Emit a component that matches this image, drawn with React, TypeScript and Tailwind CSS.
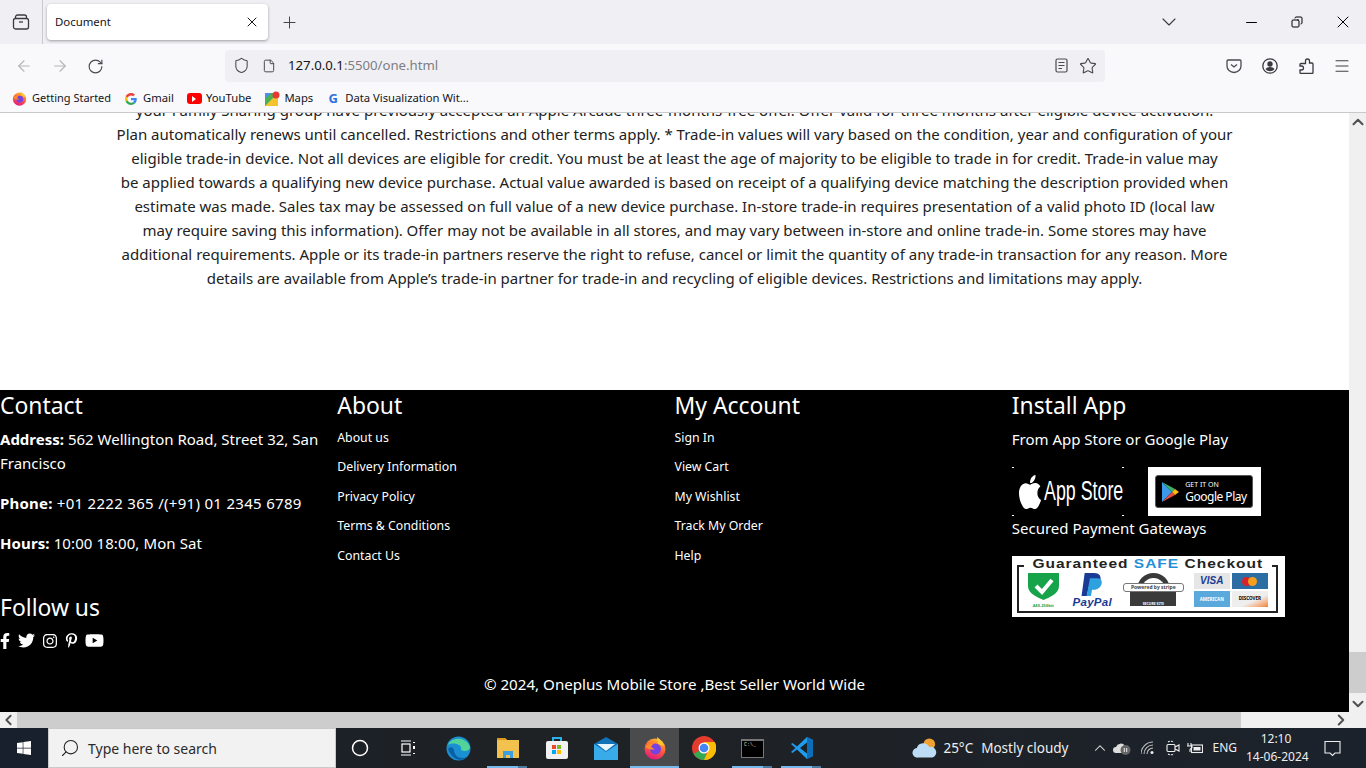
import React from "react";
import { FaFacebookF, FaTwitter, FaInstagram, FaPinterestP, FaYoutube, FaApple, FaWindows } from "react-icons/fa";
import { X, Plus, ChevronDown, Minus, Copy, ArrowLeft, ArrowRight, RotateCw, Shield, File, Star, Menu, Search, ChevronUp, ChevronLeft, ChevronRight, Circle } from "lucide-react";

const lines = [
  "your Family Sharing group have previously accepted an Apple Arcade three-months-free offer. Offer valid for three months after eligible device activation.",
  "Plan automatically renews until cancelled. Restrictions and other terms apply. * Trade-in values will vary based on the condition, year and configuration of your",
  "eligible trade-in device. Not all devices are eligible for credit. You must be at least the age of majority to be eligible to trade in for credit. Trade-in value may",
  "be applied towards a qualifying new device purchase. Actual value awarded is based on receipt of a qualifying device matching the description provided when",
  "estimate was made. Sales tax may be assessed on full value of a new device purchase. In-store trade-in requires presentation of a valid photo ID (local law",
  "may require saving this information). Offer may not be available in all stores, and may vary between in-store and online trade-in. Some stores may have",
  "additional requirements. Apple or its trade-in partners reserve the right to refuse, cancel or limit the quantity of any trade-in transaction for any reason. More",
  "details are available from Apple’s trade-in partner for trade-in and recycling of eligible devices. Restrictions and limitations may apply.",
];

function Firefox({ size = 16, id }: { size?: number; id: string }) {
  return (
    <svg width={size} height={size} viewBox="0 0 24 24">
      <defs>
        <linearGradient id={id} x1="0.7" y1="0" x2="0.3" y2="1">
          <stop offset="0" stopColor="#ffbd2e" />
          <stop offset="0.5" stopColor="#ff5a36" />
          <stop offset="1" stopColor="#e31587" />
        </linearGradient>
      </defs>
      <circle cx="12" cy="13" r="10.5" fill={`url(#${id})`} />
      <path d="M14 1c3 2 6 5 7 9l-6-2c0-3-1-5-1-7z" fill="#ffc92e" />
      <circle cx="12.5" cy="13" r="5.5" fill="#7542e5" />
      <path d="M2 11c2-3 5-4 8-3l-2 3c2 1 3 2 4 2-2 1-6 1-10-2z" fill="#ff8a2a" />
    </svg>
  );
}

function GoogleG({ size = 14 }: { size?: number }) {
  return (
    <svg width={size} height={size} viewBox="0 0 48 48">
      <path fill="#EA4335" d="M24 9.5c3.5 0 6.6 1.2 9.1 3.6l6.8-6.8C35.8 2.4 30.3 0 24 0 14.6 0 6.5 5.4 2.6 13.2l7.9 6.2C12.4 13.6 17.7 9.5 24 9.5z" />
      <path fill="#4285F4" d="M47 24.5c0-1.6-.1-3.1-.4-4.5H24v9h13c-.6 3-2.2 5.5-4.8 7.2l7.5 5.8C44.1 37.9 47 31.8 47 24.5z" />
      <path fill="#FBBC05" d="M10.5 28.6c-.5-1.4-.8-3-.8-4.6s.3-3.2.8-4.6l-7.9-6.2C.9 16.5 0 20.1 0 24s.9 7.5 2.6 10.8l7.9-6.2z" />
      <path fill="#34A853" d="M24 48c6.5 0 11.900-2.100 15.900-5.800l-7.500-5.800c-2.100 1.400-4.800 2.300-8.300 2.300-6.300 0-11.600-4.200-13.500-9.900l-7.900 6.200C6.500 42.600 14.600 48 24 48z" />
    </svg>
  );
}

function Bookmark({ icon, label, gap, ml, size = "text-[11.25px]" }: { icon: React.ReactNode; label: string; gap: string; ml: string; size?: string }) {
  return (
    <div className={`flex items-center ${gap} ${ml} ${size} text-[#15141a] whitespace-nowrap`}>
      {icon}
      <span>{label}</span>
    </div>
  );
}

function AppStoreBadge() {
  return (
    <div className="w-[112px] h-[49px] bg-black flex items-center pl-[3px] relative">
      <span className="absolute left-0 top-0 w-[2px] h-px bg-white" />
      <span className="absolute right-0 top-0 w-[2px] h-px bg-white" />
      <span className="absolute left-0 bottom-0 w-[2px] h-px bg-white" />
      <span className="absolute right-0 bottom-0 w-[2px] h-px bg-white" />
      <FaApple className="text-white scale-y-[1.3]" size={30} />
      <span className="block ml-[-1px] w-[78px] text-white text-[27px] leading-none font-['Liberation_Sans',sans-serif] whitespace-nowrap origin-left scale-x-[0.66]">App Store</span>
    </div>
  );
}

function GooglePlayBadge() {
  return (
    <div className="w-[113px] h-[49px] bg-white flex items-center justify-center">
      <div className="w-[98px] h-[33px] bg-black border border-[#555] rounded-[3px] flex items-center gap-[6px] pl-[6px]">
        <svg width="17" height="20" viewBox="0 0 17 20">
          <path d="M0 0l10 10L0 20z" fill="#3b9ae8" />
          <path d="M0 0l13 7-3 3z" fill="#36b26c" />
          <path d="M0 20l13-7-3-3z" fill="#e94b3c" />
          <path d="M13 7l4 3-4 3-3-3z" fill="#f9bc15" />
        </svg>
        <div className="text-white leading-none whitespace-nowrap">
          <div className="text-[7px] leading-[8px] mb-[1px]">GET IT ON</div>
          <div className="text-[12px] leading-[13px] tracking-[-0.5px]">Google Play</div>
        </div>
      </div>
    </div>
  );
}

function PaymentBadge() {
  return (
    <div className="relative w-[273px] h-[61px] bg-white pl-[5px] pt-[9px] text-black">
      <div className="absolute left-[12px] top-[1px] w-[248px] bg-white text-[15.5px] leading-[14px] font-bold text-center text-[#222] font-['Liberation_Sans',sans-serif] tracking-[1px] whitespace-nowrap scale-y-[0.85]">
        Guaranteed <span className="text-[#1f8fd6]">SAFE</span> Checkout
      </div>
      <div className="w-[261px] h-[48px] border-2 border-[#222] pl-[9px] pt-[6px] flex items-start">
        <div className="w-[31px] flex flex-col items-center">
          <svg width="31" height="27" viewBox="0 0 31 27">
            <path d="M0 0h31v13c0 7-8 11-15.500 14C8 24 0 20 0 13z" fill="#16a34a" />
            <path d="M8 13l6 6L24 7" stroke="#fff" strokeWidth="4" fill="none" />
          </svg>
          <span className="mt-[3px] text-[4px] leading-[5px] text-[#16a34a] font-bold whitespace-nowrap">AES-256bit</span>
        </div>
        <div className="ml-[9px] w-[49px] flex flex-col items-center font-['Liberation_Sans',sans-serif]">
          <svg width="26" height="23" viewBox="0 0 22 22">
            <path d="M4 0h9c5 0 7 3 6 7s-4 6-8 6H8l-2 9H1z" fill="#1a3b94" />
            <path d="M9 5h7c4 0 5 3 4 6s-4 5-7 5h-2l-1 6H6z" fill="#2da0df" />
          </svg>
          <span className="mt-[2px] text-[11.5px] leading-[9px] font-bold italic text-[#1a3b94] tracking-[0.3px]">PayPal</span>
        </div>
        <div className="ml-[6px] relative w-[61px] h-[33px] flex flex-col items-center">
          <div className="w-[33px] h-[18px] border-[5px] border-b-0 border-[#3a3a3a] rounded-t-full" />
          <div className="w-[46px] h-[15px] bg-[#3a3a3a]" />
          <div className="absolute top-[10px] w-[61px] h-[9px] bg-white border border-[#777] rounded-[3px] text-[5px] leading-[7px] text-center font-bold text-[#444] whitespace-nowrap">Powered by stripe</div>
          <div className="absolute bottom-0 text-[3.5px] leading-[5px] text-white font-bold whitespace-nowrap">SECURE SITE</div>
        </div>
        <div className="ml-[10px] w-[74px] grid grid-cols-2 gap-[2px]">
          <div className="h-[16px] bg-[#e6e6e6] text-[10px] leading-[16px] text-center font-bold italic text-[#1a3b94] font-['Liberation_Sans',sans-serif]">VISA</div>
          <div className="h-[16px] bg-[#2c6ea3] flex items-center justify-center">
            <span className="w-[9px] h-[9px] rounded-full bg-[#d8232a]" />
            <span className="w-[9px] h-[9px] rounded-full bg-[#f79e1b] -ml-[3px]" />
          </div>
          <div className="h-[16px] bg-[#5aa9dd] text-[4.5px] leading-[16px] text-center text-white font-bold whitespace-nowrap overflow-hidden">AMERICAN</div>
          <div className="h-[16px] text-[4.5px] leading-[14px] text-center font-bold bg-gradient-to-br from-[#eeeeee] from-60% to-[#f08020]">DISCOVER</div>
        </div>
      </div>
    </div>
  );
}

function TaskIcon({ children, active, running, narrow }: { children: React.ReactNode; active?: boolean; running?: boolean; narrow?: boolean }) {
  return (
    <div className={`relative w-[49px] h-[40px] flex items-center justify-center ${active ? "bg-[#4a4b4d]" : ""}`}>
      {children}
      {running && !narrow && <span className="absolute bottom-0 left-0 h-[2px] w-full bg-[#76b9ed]" />}
      {running && narrow && (
        <span className="absolute bottom-0 left-[4px] w-[40px] h-[2px] flex">
          <span className="w-[31px] bg-[#76b9ed]" />
          <span className="w-[9px] bg-[#4d7a9f]" />
        </span>
      )}
    </div>
  );
}

function Links({ items }: { items: string[] }) {
  return (
    <div className="mt-[7.6px] flex flex-col gap-[10.5px] text-[12.3px] leading-[19px]">
      {items.map((t) => <div key={t}>{t}</div>)}
    </div>
  );
}

function Heading({ children, className = "" }: { children: React.ReactNode; className?: string }) {
  return <div className={`h-[30px] text-[22.9px] leading-[32px] ${className}`}>{children}</div>;
}

export default function App() {
  return (
    <div className="w-[1366px] h-[768px] overflow-hidden flex flex-col bg-white font-['Noto_Sans',sans-serif]">
      {/* tab strip */}
      <div className="h-[44px] bg-[#f0f0f4] flex items-center shrink-0">
        <div className="w-[42px] flex justify-center">
          <svg width="18" height="18" viewBox="0 0 18 18" fill="none" stroke="#3a3a3f" strokeWidth="1.3">
            <rect x="1.5" y="5.500" width="15" height="10.500" rx="2" />
            <path d="M3.500 5.500V4a2 2 0 0 1 2-2h7a2 2 0 0 1 2 2v1.500" />
            <path d="M7 9h4" />
          </svg>
        </div>
        <div className="w-px h-[44px] bg-[#c9c9ce]" />
        <div className="ml-[4px] w-[221px] h-[36px] rounded-[4px] bg-white shadow-[0_1px_3px_rgba(0,0,0,0.35)] flex items-center justify-between pl-[8px] pr-[8px]">
          <span className="text-[11.4px] text-[#15141a]">Document</span>
          <X size={16} strokeWidth={1.5} className="text-[#15141a]" />
        </div>
        <Plus size={19} strokeWidth={1.2} className="ml-[12px] text-[#3a3a3f]" />
        <div className="ml-auto flex items-center">
          <ChevronDown size={24} strokeWidth={1.1} className="text-[#3a3a3f] mr-[62px]" />
          <Minus size={17} strokeWidth={1.4} className="text-black mr-[31px]" />
          <Copy size={12} strokeWidth={2} className="text-black mr-[30px] -scale-x-100" />
          <X size={20} strokeWidth={1.2} className="text-black mr-[13px]" />
        </div>
      </div>
      {/* nav */}
      <div className="h-[44px] bg-[#f9f9fb] flex items-center shrink-0">
        <ArrowLeft size={18} strokeWidth={1.5} className="ml-[15px] text-[#b5b5b8]" />
        <ArrowRight size={18} strokeWidth={1.5} className="ml-[18px] text-[#b5b5b8]" />
        <RotateCw size={17} strokeWidth={1.6} className="ml-[18px] text-[#4a4a4f]" />
        <div className="ml-[121px] w-[880px] h-[32px] mt-[-1px] bg-[#f0f0f4] rounded-[4px] flex items-center pl-[8px] pr-[8px]">
          <Shield size={17} strokeWidth={1.5} className="text-[#4a4a4f]" />
          <File size={14} strokeWidth={1.7} className="ml-[12px] text-[#4a4a4f]" />
          <span className="ml-[12px] text-[13.2px] text-[#15141a]">127.0.0.1<span className="text-[#7d7d84]">:5500/one.html</span></span>
          <svg width="13" height="15" viewBox="0 0 13 15" fill="none" stroke="#4a4a4f" strokeWidth="1.200" className="ml-auto">
            <rect x="1" y="1" width="11" height="13" rx="1.500" />
            <path d="M3.500 4.500h6M3.500 7.500h6M3.500 10.500h3.500" />
          </svg>
          <Star size={18} strokeWidth={1.5} className="ml-[11px] text-[#4a4a4f]" />
        </div>
        <svg width="16" height="16" viewBox="0 0 16 16" className="ml-[121px]">
          <path d="M2 2h12a1 1 0 0 1 1 1v5a7 6.500 0 0 1-14 0V3a1 1 0 0 1 1-1z" fill="none" stroke="#4a4a4f" strokeWidth="1.300" />
          <path d="M5 6.500l3 2.500 3-2.500" fill="none" stroke="#4a4a4f" strokeWidth="1.300" />
        </svg>
        <svg width="16" height="16" viewBox="0 0 16 16" className="ml-[20px]">
          <circle cx="8" cy="8" r="7.200" fill="none" stroke="#3a3a3f" strokeWidth="1.300" />
          <circle cx="8" cy="6" r="2.700" fill="#3a3a3f" />
          <path d="M3.500 11a5 3.500 0 0 1 9 0c-1 1.500-3 2.200-4.500 2.200s-3.500-.7-4.500-2.200z" fill="#3a3a3f" />
        </svg>
        <svg width="16" height="16" viewBox="0 0 16 16" fill="none" stroke="#3a3a3f" strokeWidth="1.300" className="ml-[20px]">
          <path d="M9.500 1a2 2 0 0 1 2 2v2H14a1 1 0 0 1 1 1v8.500a1 1 0 0 1-1 1H3a1 1 0 0 1-1-1v-2.500h1.500a2 2 0 0 0 0-4H2V6.500a1 1 0 0 1 1-1h4.500V3a2 2 0 0 1 2-2z" />
        </svg>
        <Menu size={18} strokeWidth={1.3} className="ml-[19px] text-[#3a3a3f]" />
      </div>
      {/* bookmarks */}
      <div className="h-[25px] bg-[#f9f9fb] border-b border-[#c9c9cc] flex items-center pl-[12px] pb-[3px] shrink-0">
        <Bookmark ml="" gap="gap-[5px]" size="text-[11px]" icon={<Firefox size={15} id="ffbm" />} label="Getting Started" />
        <Bookmark ml="ml-[14px]" gap="gap-[6px]" icon={<GoogleG size={12} />} label="Gmail" />
        <Bookmark ml="ml-[13px]" gap="gap-[4px]" icon={
          <span className="w-[15px] h-[11px] rounded-[3px] bg-[#f00] flex items-center justify-center">
            <span className="w-0 h-0 border-y-[3px] border-y-transparent border-l-[4px] border-l-white" />
          </span>} label="YouTube" />
        <Bookmark ml="ml-[14px]" gap="gap-[4px]" icon={
          <svg width="15" height="15" viewBox="0 0 15 15">
            <rect y="2" width="13" height="13" fill="#4caf50" />
            <path d="M0 15L13 2v13z" fill="#f4c430" />
            <path d="M0 2h6L0 8z" fill="#4a8ef0" />
            <circle cx="11" cy="4" r="3.500" fill="#e53935" />
          </svg>} label="Maps" />
        <Bookmark ml="ml-[14px]" gap="gap-[6px]" icon={<span className="text-[13px] font-bold text-[#2f6fde] w-[12px] text-center leading-none">G</span>} label="Data Visualization Wit..." />
      </div>
      {/* page */}
      <div className="flex-1 flex min-h-0">
        <div className="flex-1 min-w-0 flex flex-col overflow-hidden">
          <div className="h-[277px] shrink-0 overflow-hidden">
            <div className="mt-[-15px] text-center text-[15px] leading-[24px] text-[#222] whitespace-nowrap">
              {lines.map((l) => <div key={l}>{l}</div>)}
            </div>
          </div>
          <footer className="flex-1 bg-black text-white flex flex-col">
            <div className="grid grid-cols-4 flex-1">
              <div>
                <Heading>Contact</Heading>
                <p className="mt-[7px] text-[15px] leading-[24px] w-[330px]"><b className="font-bold">Address:</b> 562 Wellington Road, Street 32, San Francisco</p>
                <p className="mt-[16px] text-[15px] leading-[24px] tracking-[0.3px]"><b className="font-bold tracking-[0.2px]">Phone:</b> +01 2222 365 /(+91) 01 2345 6789</p>
                <p className="mt-[16px] text-[15px] leading-[24px] tracking-[0.1px]"><b className="font-bold">Hours:</b> 10:00 18:00, Mon Sat</p>
                <Heading className="mt-[37px]">Follow us</Heading>
                <div className="mt-[9px] -ml-[3px] flex items-center gap-[6px]">
                  <FaFacebookF size={16} />
                  <FaTwitter size={17} className="-translate-x-[1px]" />
                  <FaInstagram size={16} />
                  <FaPinterestP size={15} />
                  <FaYoutube size={19} />
                </div>
              </div>
              <div>
                <Heading>About</Heading>
                <Links items={["About us", "Delivery Information", "Privacy Policy", "Terms & Conditions", "Contact Us"]} />
              </div>
              <div>
                <Heading>My Account</Heading>
                <Links items={["Sign In", "View Cart", "My Wishlist", "Track My Order", "Help"]} />
              </div>
              <div>
                <Heading>Install App</Heading>
                <p className="mt-[7px] text-[15px] leading-[24px]">From App Store or Google Play</p>
                <div className="mt-[16px] flex gap-[24px]">
                  <AppStoreBadge />
                  <GooglePlayBadge />
                </div>
                <p className="text-[15px] leading-[24px]">Secured Payment Gateways</p>
                <div className="mt-[16px]"><PaymentBadge /></div>
              </div>
            </div>
            <div className="h-[40px] pb-[15px] text-center text-[15.15px] leading-[24px]">© 2024, Oneplus Mobile Store ,Best Seller World Wide</div>
          </footer>
        </div>
        <div className="w-[17px] bg-[#f0f0f0] flex flex-col items-center shrink-0">
          <div className="h-[17px] flex items-center"><ChevronUp size={18} strokeWidth={2.7} className="text-[#505050]" /></div>
          <div className="flex-1" />
          <div className="w-full h-[41px] bg-[#cdcdcd] mb-[2px]" />
          <div className="h-[17px] flex items-center"><ChevronDown size={18} strokeWidth={2.7} className="text-[#505050]" /></div>
        </div>
      </div>
      {/* horizontal scrollbar */}
      <div className="h-[16px] bg-[#f0f0f0] flex items-center shrink-0 pr-[17px]">
        <div className="w-[17px] flex items-center justify-center"><ChevronLeft size={18} strokeWidth={2.7} className="text-[#505050]" /></div>
        <div className="w-[1224px] h-[16px] bg-[#cdcdcd]" />
        <div className="flex-1 flex items-center justify-end -mr-[1px]"><ChevronRight size={18} strokeWidth={2.7} className="text-[#505050]" /></div>
      </div>
      {/* taskbar */}
      <div className="h-[40px] bg-gradient-to-r from-[#18202e] via-[#1f2224] via-40% to-[#1c222c] text-white flex items-center shrink-0">
        <div className="w-[48px] flex justify-center"><FaWindows size={16} /></div>
        <div className="w-[288px] h-[40px] bg-[#f2f2f2] border border-[#c9c9c9] flex items-center pl-[11px] text-[#2b2b2b] text-[14px]">
          <Search size={20} strokeWidth={1.3} className="-scale-x-100 text-[#222]" />
          <span className="ml-[8px]">Type here to search</span>
        </div>
        <div className="w-[49px] flex justify-center"><Circle size={18} strokeWidth={2} className="-ml-[1px]" /></div>
        <div className="w-[49px] flex justify-center">
          <svg width="16" height="16" viewBox="0 0 16 16" fill="none" stroke="#fff" strokeWidth="1.200" className="-ml-[3px]">
            <path d="M1 1h10M1 15h10" /><rect x="2" y="4" width="8" height="8" /><path d="M14 2v1M14 6v3M14 13v1" strokeWidth="2" />
          </svg>
        </div>
        <TaskIcon>
          <svg width="25" height="25" viewBox="0 0 25 25">
            <circle cx="12.500" cy="12.500" r="12" fill="#1a8fd1" />
            <path d="M2 9C5 1 20 0 24 11c0 4-6 5-9 3 2-6-9-8-13-5z" fill="#52d39a" />
            <path d="M8 14c0 6 6 10 13 7-7 6-15 2-19-8 2-3 5-2 6 1z" fill="#0b5fa5" />
          </svg>
        </TaskIcon>
        <TaskIcon running narrow>
          <svg width="22" height="20" viewBox="0 0 22 20">
            <path d="M0 0h8l2 2h12v18H0z" fill="#f2c14e" />
            <path d="M0 0h8l2 2H0z" fill="#d99a1c" />
            <path d="M6 13h10v7h-3v-3H9v3H6z" fill="#3c9fe0" />
          </svg>
        </TaskIcon>
        <TaskIcon>
          <svg width="24" height="24" viewBox="0 0 24 24">
            <path d="M8 6V2h8v4" fill="none" stroke="#2ab1ea" strokeWidth="2" />
            <rect x="1" y="5" width="22" height="18" rx="2" fill="#f1f1f1" />
            <rect x="7" y="9" width="4" height="4" fill="#e8482c" />
            <rect x="12" y="9" width="4" height="4" fill="#7cb927" />
            <rect x="7" y="14" width="4" height="4" fill="#06a4ef" />
            <rect x="12" y="14" width="4" height="4" fill="#ffb900" />
          </svg>
        </TaskIcon>
        <TaskIcon>
          <svg width="24" height="23" viewBox="0 0 24 23">
            <path d="M0 7L12 0l12 7v16H0z" fill="#1272b8" />
            <path d="M3 7h18l-9 7z" fill="#e8f4fc" />
            <path d="M0 7l12 8 12-8v16H0z" fill="#39abe8" />
          </svg>
        </TaskIcon>
        <TaskIcon active running><Firefox size={24} id="fftb" /></TaskIcon>
        <TaskIcon>
          <svg width="24" height="24" viewBox="0 0 24 24">
            <circle cx="12" cy="12" r="12" fill="#e33b2e" />
            <path d="M12 12L1.500 18A12 12 0 0 0 16 23.300z" fill="#34a853" />
            <path d="M12 6h10.700A12 12 0 0 1 12 24l4-9z" fill="#fbbc05" />
            <circle cx="12" cy="12" r="5.500" fill="#fff" />
            <circle cx="12" cy="12" r="4.300" fill="#4285f4" />
          </svg>
        </TaskIcon>
        <TaskIcon running narrow>
          <div className="w-[23px] h-[19px] bg-black border border-[#777] border-t-2 flex items-start pl-[2px] pt-[2px]">
            <span className="text-[5px] leading-[5px] text-[#ddd] font-['Liberation_Mono',monospace] whitespace-nowrap">C:\_</span>
          </div>
        </TaskIcon>
        <TaskIcon running narrow>
          <svg width="24" height="24" viewBox="0 0 24 24">
            <path d="M17 1l6 3v16l-6 3-10-9.500-4.500 3.500L1 16l4.500-4L1 8l1.500-1 4.500 3.500z" fill="#1f9cf0" />
            <path d="M17 6.500L10 12l7 5.500z" fill="#1f2225" />
            <path d="M17 1l6 3v16l-6 3z" fill="#0a6fb8" />
          </svg>
        </TaskIcon>
        <div className="ml-auto flex items-center">
          <svg width="25" height="22" viewBox="0 0 26 22">
            <circle cx="18" cy="7" r="6" fill="#f0a030" />
            <path d="M6 21a5 5 0 0 1-1-10 7 7 0 0 1 13-1 5.500 5.500 0 0 1 3 11z" fill="#bcdcf5" />
          </svg>
          <span className="ml-[6px] text-[13.5px] text-[#eee]">25°C</span>
          <span className="ml-[8px] text-[13.5px] text-[#eee]">Mostly cloudy</span>
          <ChevronUp size={18} strokeWidth={1.4} className="ml-[23px] text-[#eee]" />
          <svg width="18" height="14" viewBox="0 0 18 14" className="ml-[4px]">
            <path d="M3 12a3 3 0 0 1 0-6 5 5 0 0 1 9-1 4 4 0 0 1 3 7z" fill="#ddd" />
            <circle cx="12.500" cy="9" r="5" fill="#666" />
            <path d="M11.300 7v4M13.700 7v4" stroke="#eee" strokeWidth="1" />
          </svg>
          <svg width="14" height="14" viewBox="0 0 14 14" fill="none" stroke="#bbb" strokeWidth="1.100" className="ml-[10px]">
            <path d="M1 13A12 12 0 0 1 13 1M4 13a9 9 0 0 1 9-9M7 13a6 6 0 0 1 6-6" transform="translate(-1 0)" />
            <circle cx="11" cy="11.500" r="1.500" fill="#eee" stroke="none" />
          </svg>
          <svg width="14" height="16" viewBox="0 0 14 16" fill="none" stroke="#eee" strokeWidth="1.100" className="ml-[11px]">
            <rect x="1" y="4.500" width="8" height="7" rx="1" />
            <path d="M9 7l4-2v6l-4-2" />
            <path d="M2 2a6 6 0 0 1 6 0M2 14a6 6 0 0 0 6 0" strokeDasharray="2 1" />
          </svg>
          <svg width="16" height="12" viewBox="0 0 16 12" className="ml-[7px]">
            <rect x="4.500" y="3" width="11" height="7.500" fill="none" stroke="#eee" strokeWidth="1.100" />
            <rect x="6.500" y="5" width="7" height="3.500" fill="#eee" />
            <path d="M1 1v3M4 1v3M0 4h5v1.500l-2 2V10" stroke="#eee" strokeWidth="1.100" fill="none" />
          </svg>
          <span className="ml-[9px] text-[12px] text-[#eee]">ENG</span>
          <div className="ml-[9px] w-[60px] text-center text-[12px] leading-[18px] text-[#eee] whitespace-nowrap">
            <div>12:10</div>
            <div>14-06-2024</div>
          </div>
          <svg width="17" height="17" viewBox="0 0 17 17" fill="none" stroke="#eee" strokeWidth="1.100" className="ml-[18px] mr-[25px]">
            <path d="M1 1.500h15v11.500h-5l-2.500 2.500-2.500-2.500H1z" />
          </svg>
        </div>
      </div>
    </div>
  );
}
